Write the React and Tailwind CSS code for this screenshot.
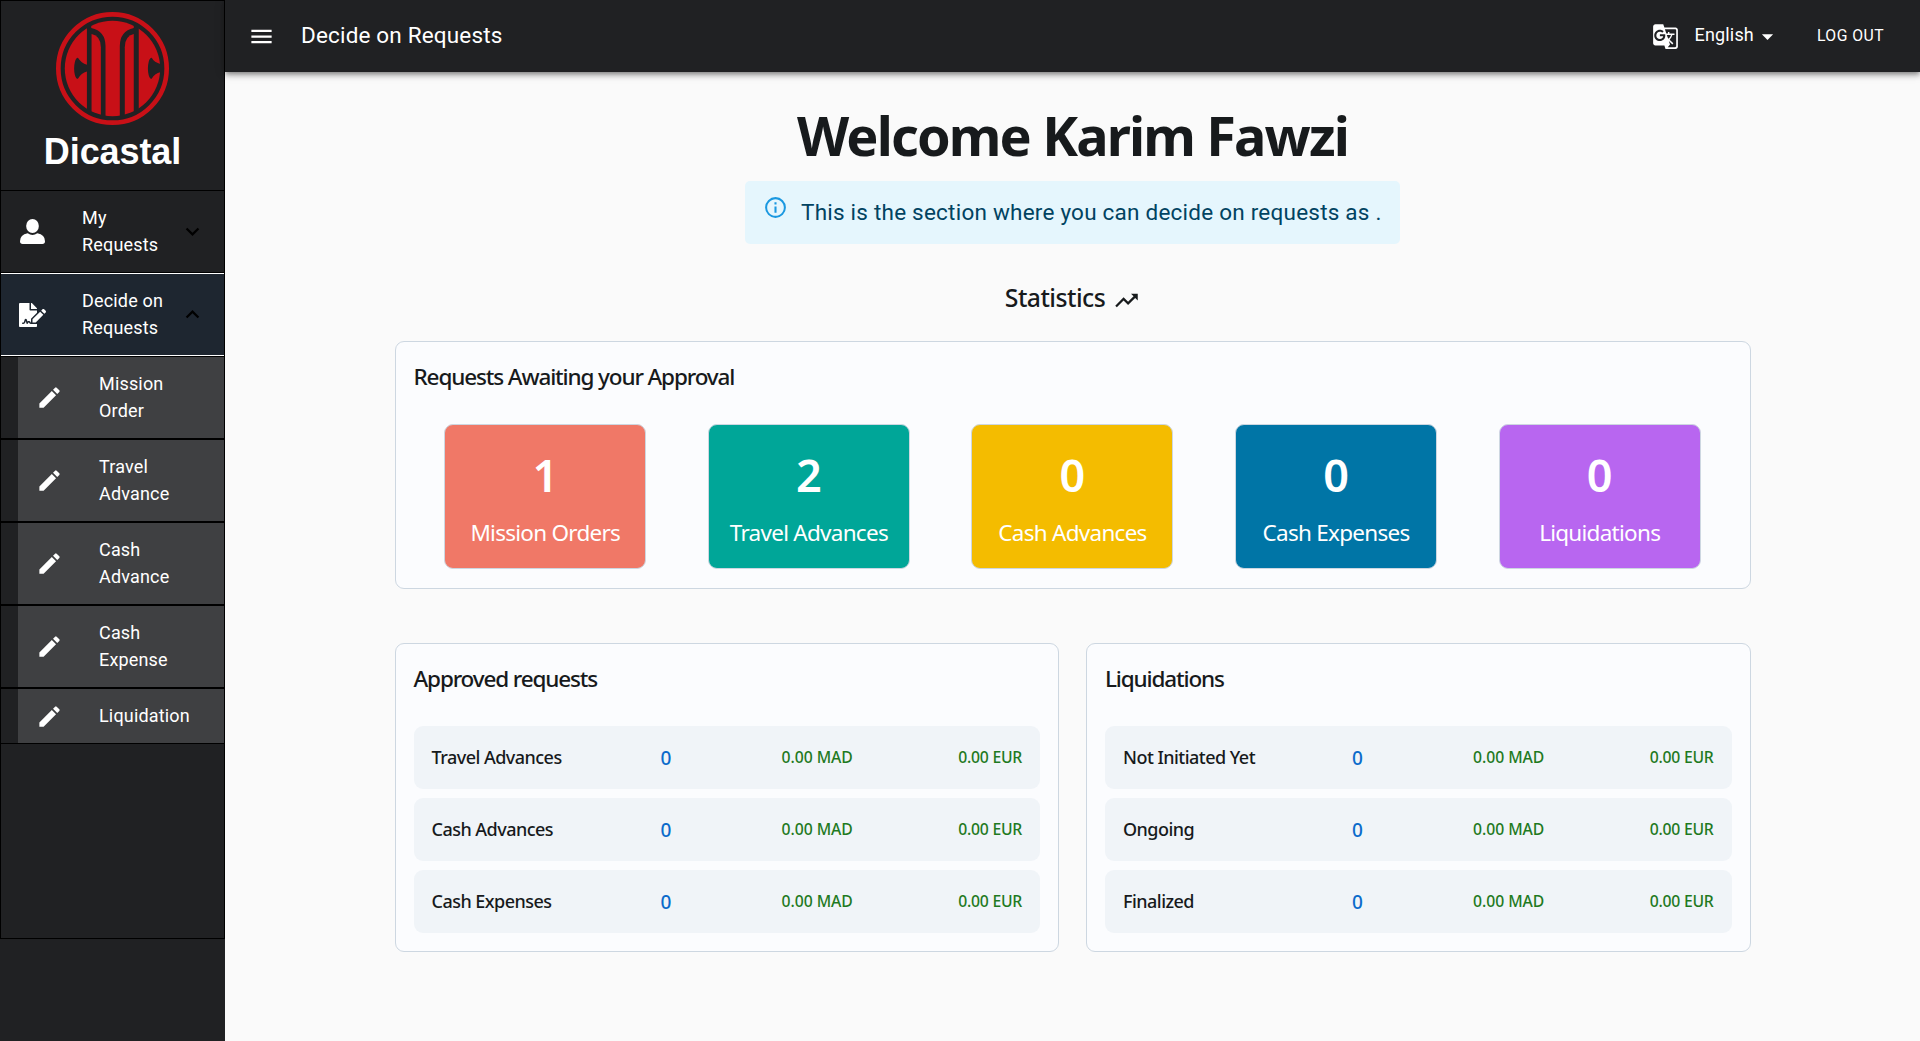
import {
  MdMenu,
  MdGTranslate,
  MdArrowDropDown,
  MdEdit,
  MdExpandMore,
  MdExpandLess,
  MdTrendingUp,
} from "react-icons/md";
import { FaFileSignature } from "react-icons/fa";

const subItems = ["Mission Order", "Travel Advance", "Cash Advance", "Cash Expense"];

const pending = [
  { count: 1, label: "Mission Orders", color: "bg-[#f07867]" },
  { count: 2, label: "Travel Advances", color: "bg-[#00a698]" },
  { count: 0, label: "Cash Advances", color: "bg-[#f4bc00]" },
  { count: 0, label: "Cash Expenses", color: "bg-[#0075a6]" },
  { count: 0, label: "Liquidations", color: "bg-[#b866f0]" },
];

function Logo() {
  return (
    <svg className="size-[113px]" viewBox="168 36 340 340" fill="#c81017">
      <defs>
        <clipPath id="disc">
          <circle cx="338" cy="206" r="143.5" />
        </clipPath>
      </defs>
      <circle cx="338" cy="206" r="163" fill="none" stroke="#c81017" strokeWidth="14" />
      <g clipPath="url(#disc)">
        <path d="M190 60H261V195Q244 190 234 174Q228 174 225 186Q220 206 225 226Q228 237 234 237Q244 219 261 215V350H190Z" />
        <path d="M275 102Q303 108 303 142V360H275Z" />
        <path d="M274 60H402V84Q360 94 360 138V360H317V138Q317 94 274 84Z" />
        <path d="M402 102Q375 108 375 142V360H402Z" />
        <path d="M417 60H490V194Q464 190 456 174Q450 174 447 186Q442 206 447 226Q450 237 456 237Q464 219 490 215V350H417Z" />
      </g>
    </svg>
  );
}

function PersonIcon() {
  return (
    <svg className="size-[25px]" viewBox="0 0 75 75" fill="currentColor">
      <ellipse cx="37.5" cy="21" rx="19" ry="21" />
      <path d="M0 67Q0 47 23 43Q37.500 53 52 43Q75 47 75 67Q75 75 67 75H8Q0 75 0 67Z" />
    </svg>
  );
}

function InfoIcon() {
  return (
    <svg className="size-[25px]" viewBox="0 0 24 24" fill="#1a98e0">
      <path d="M11,7H13V9H11V7M11,11H13V17H11V11M12,2A10,10 0 0,0 2,12A10,10 0 0,0 12,22A10,10 0 0,0 22,12A10,10 0 0,0 12,2M12,20C7.590,20 4,16.410 4,12C4,7.590 7.590,4 12,4C16.410,4 20,7.590 20,12C20,16.410 16.410,20 12,20Z" />
    </svg>
  );
}

function MenuGroup({ icon, label, chevron, active }) {
  return (
    <div
      className={
        active
          ? "flex h-[83px] items-center border-y border-white bg-[#1e2630] pl-[18px] pr-[18px]"
          : "flex h-[83px] items-center border-y border-black pl-[18px] pr-[18px]"
      }
    >
      <span className="flex w-[63px] shrink-0">{icon}</span>
      <span className="flex-1 pb-[2px]">{label}</span>
      <span className="shrink-0 text-[27px] text-black">{chevron}</span>
    </div>
  );
}

function SubItem({ label, single }) {
  return (
    <div
      className={
        single
          ? "flex h-14 border-y border-black pl-[17px]"
          : "flex h-[83px] border-y border-black pl-[17px]"
      }
    >
      <div className="flex flex-1 items-center bg-[#3f4042] pl-[18px]">
        <span className="w-[63px] shrink-0 text-[27px]">
          <MdEdit />
        </span>
        <span className={single ? "whitespace-nowrap pb-[2px]" : "w-[80px] pb-[2px]"}>{label}</span>
      </div>
    </div>
  );
}

function Sidebar() {
  return (
    <aside className="w-[225px] shrink-0 bg-[#202123]">
      <div className="h-[939px] border border-black text-[18px] leading-[27px] tracking-[0.17px] text-white">
        <div className="flex h-[189px] flex-col items-center pt-[11px]">
          <Logo />
          <div className="mt-[6px] font-['Liberation_Sans',Arial,sans-serif] text-[36px] font-bold leading-[41px] tracking-[-0.1px]">
            Dicastal
          </div>
        </div>
        <MenuGroup icon={<span className="ml-px"><PersonIcon /></span>} label="My Requests" chevron={<MdExpandMore />} />
        <MenuGroup icon={<FaFileSignature className="h-6 w-[27px]" />} label="Decide on Requests" chevron={<MdExpandLess />} active />
        {subItems.map((s) => (
          <SubItem key={s} label={s} />
        ))}
        <SubItem label="Liquidation" single />
      </div>
    </aside>
  );
}

function Header() {
  return (
    <header className="relative z-10 flex h-[72px] shrink-0 items-center bg-[#202123] pl-[23px] pr-9 text-white shadow-[0px_2px_4px_-1px_rgba(0,0,0,0.3),0px_4px_5px_0px_rgba(0,0,0,0.2),0px_1px_11px_0px_rgba(0,0,0,0.15)]">
      <MdMenu className="size-[27px]" />
      <h1 className="ml-[26px] pb-[2px] text-[22.5px] leading-9 tracking-[0.17px]">Decide on Requests</h1>
      <div className="ml-auto flex items-center">
        <MdGTranslate className="size-[27px]" />
        <span className="ml-[16px] pb-[3px] text-[18px] leading-[27px] tracking-[0.17px]">English</span>
        <MdArrowDropDown className="size-[27px]" />
        <span className="ml-[36px] pb-[2px] text-[15.75px] leading-[27px] tracking-[0.45px]">LOG OUT</span>
      </div>
    </header>
  );
}

function PendingCard({ count, label, color }) {
  return (
    <div className={`flex h-[145px] w-[202px] flex-col items-center rounded-[9px] border border-[#cdd7e1] pt-[23px] text-white ${color}`}>
      <span className="text-[45px] font-semibold leading-[54px]">{count}</span>
      <span className="mt-[14px] text-[22.5px] leading-[34px] tracking-[-0.73px]">{label}</span>
    </div>
  );
}

function SummaryCard({ title, rows }) {
  return (
    <section className="h-[309px] flex-1 rounded-[9px] border border-[#cdd7e1] bg-[#fbfcfe] px-[18px]">
      <h3 className="mt-[18px] text-[22.5px] font-medium leading-[34px] tracking-[-1.15px]">{title}</h3>
      <div className="mt-[30px] flex flex-col gap-[9px]">
        {rows.map((name) => (
          <div
            key={name}
            className="grid h-[63px] grid-cols-[228px_122px_1fr_auto] items-center rounded-[9px] bg-[#f0f4f8] px-[18px] text-[15.75px] font-medium text-[#1f7a1f]"
          >
            <span className="text-[18px] tracking-[-0.53px] text-[#171a1c]">{name}</span>
            <span className="pl-px pt-[2px] text-[19px] text-[#0b6bcb]">0</span>
            <span className="tracking-[-0.05px]">0.00 MAD</span>
            <span className="tracking-[-0.25px]">0.00 EUR</span>
          </div>
        ))}
      </div>
    </section>
  );
}

export default function App() {
  return (
    <div className="flex h-[1041px] w-[1920px] overflow-hidden bg-[#fafafa] font-[Roboto,sans-serif]">
      <Sidebar />
      <div className="flex flex-1 flex-col">
        <Header />
        <main className="flex flex-col items-center font-['Noto_Sans',sans-serif] text-[#171a1c]">
          <h2 className="mt-[27px] text-[54px] font-bold leading-[72px] tracking-[-1.85px]">Welcome Karim Fawzi</h2>
          <div className="mt-[10px] flex h-[63px] w-[655px] rounded-[5px] bg-[#e5f6fd] pl-[18px] font-[Roboto,sans-serif] text-[#014361]">
            <div className="pt-[14px]">
              <InfoIcon />
            </div>
            <p className="ml-[13px] pt-[14px] text-[22.5px] leading-[34px] tracking-[0.225px]">
              This is the section where you can decide on requests as .
            </p>
          </div>
          <div className="mt-[36px] flex items-center">
            <h3 className="text-[24.75px] font-medium leading-[36px] tracking-[-0.55px]">Statistics</h3>
            <MdTrendingUp className="ml-[8px] mt-[4px] size-[27px]" />
          </div>
          <section className="mt-[25px] h-[248px] w-[1356px] rounded-[9px] border border-[#cdd7e1] bg-[#fbfcfe] px-[18px]">
            <h3 className="mt-[18px] text-[22.5px] font-medium leading-[34px] tracking-[-1.13px]">
              Requests Awaiting your Approval
            </h3>
            <div className="mt-[30px] flex justify-around">
              {pending.map((p) => (
                <PendingCard key={p.label} {...p} />
              ))}
            </div>
          </section>
          <div className="mt-[54px] flex w-[1356px] gap-[27px]">
            <SummaryCard title="Approved requests" rows={["Travel Advances", "Cash Advances", "Cash Expenses"]} />
            <SummaryCard title="Liquidations" rows={["Not Initiated Yet", "Ongoing", "Finalized"]} />
          </div>
        </main>
      </div>
    </div>
  );
}
